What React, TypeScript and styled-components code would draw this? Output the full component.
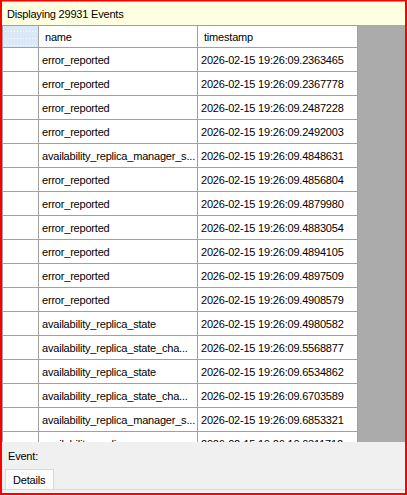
import React from "react";
import styled, { createGlobalStyle } from "styled-components";

const GlobalStyle = createGlobalStyle`
  html, body { margin: 0; padding: 0; background: #ffffff; }
  body { font-family: "Liberation Sans", Arial, sans-serif; }
`;

const Frame = styled.div`
  box-sizing: border-box;
  width: 407px;
  height: 495px;
  border: 2px solid #ff0000;
  border-top-width: 1px;
  background: #f0f0f0;
  display: flex;
  flex-direction: column;
  font-family: "Liberation Sans", Arial, sans-serif;
  font-size: 11px;
  letter-spacing: -0.2px;
  color: #000;
`;

const InfoBar = styled.div`
  box-sizing: border-box;
  height: 24px;
  flex: none;
  border-top: 1px solid #a0a0a0;
  background: #ffffe1;
  display: flex;
  align-items: center;
  padding-left: 5px;
`;

const Viewport = styled.div`
  height: 417px;
  flex: none;
  background: #ababab;
  overflow: hidden;
`;

const Table = styled.div`
  width: 356px;
  box-sizing: border-box;
  border-left: 1px solid #a0a0a0;
  border-top: 1px solid #a0a0a0;
  display: grid;
  grid-template-columns: 36px 159px 160px;
`;

const Cell = styled.div<{ $head?: boolean }>`
  box-sizing: border-box;
  height: ${(p) => (p.$head ? 22 : 24)}px;
  border-right: 1px solid #a0a0a0;
  border-bottom: 1px solid #a0a0a0;
  background: #ffffff;
  display: flex;
  align-items: center;
  padding-left: ${(p) => (p.$head ? 6 : 3)}px;
  white-space: nowrap;
  overflow: hidden;
`;

const Corner = styled.div`
  box-sizing: border-box;
  height: 22px;
  border-right: 1px solid #a0a0a0;
  border-bottom: 1px solid #a0a0a0;
  background-color: #dae8f8;
  background-image: radial-gradient(circle, rgba(255, 255, 255, 0.95) 0.7px, transparent 0.9px);
  background-size: 3px 7px;
  background-position: 1px 2px;
`;

const RowHead = styled.div`
  box-sizing: border-box;
  height: 24px;
  border-right: 1px solid #a0a0a0;
  border-bottom: 1px solid #a0a0a0;
  background: #ffffff;
`;

const BottomPanel = styled.div`
  flex: 1;
  display: flex;
  flex-direction: column;
  background: #f0f0f0;
  padding: 7px 0 3px 0;
`;

const EventLabel = styled.div`
  margin-left: 6px;
  line-height: 14px;
`;

const TabStrip = styled.div`
  margin-top: auto;
  display: flex;
  padding-left: 3px;
  border-bottom: 1px solid #d9d9d9;
`;

const Tab = styled.div`
  box-sizing: border-box;
  width: 49px;
  height: 20px;
  border: 1px solid #d9d9d9;
  border-bottom: none;
  background: #fcfcfc;
  display: flex;
  align-items: center;
  padding-left: 7px;
`;

const rows: [string, string][] = [
  ["error_reported", "2026-02-15 19:26:09.2363465"],
  ["error_reported", "2026-02-15 19:26:09.2367778"],
  ["error_reported", "2026-02-15 19:26:09.2487228"],
  ["error_reported", "2026-02-15 19:26:09.2492003"],
  ["availability_replica_manager_s...", "2026-02-15 19:26:09.4848631"],
  ["error_reported", "2026-02-15 19:26:09.4856804"],
  ["error_reported", "2026-02-15 19:26:09.4879980"],
  ["error_reported", "2026-02-15 19:26:09.4883054"],
  ["error_reported", "2026-02-15 19:26:09.4894105"],
  ["error_reported", "2026-02-15 19:26:09.4897509"],
  ["error_reported", "2026-02-15 19:26:09.4908579"],
  ["availability_replica_state", "2026-02-15 19:26:09.4980582"],
  ["availability_replica_state_cha...", "2026-02-15 19:26:09.5568877"],
  ["availability_replica_state", "2026-02-15 19:26:09.6534862"],
  ["availability_replica_state_cha...", "2026-02-15 19:26:09.6703589"],
  ["availability_replica_manager_s...", "2026-02-15 19:26:09.6853321"],
  ["availability_replica_manager_s...", "2026-02-15 19:26:10.0311712"],
];

export default function App() {
  return (
    <>
      <GlobalStyle />
      <Frame>
        <InfoBar>Displaying 29931 Events</InfoBar>
        <Viewport>
          <Table>
            <Corner />
            <Cell $head>name</Cell>
            <Cell $head>timestamp</Cell>
            {rows.map(([name, ts], i) => (
              <React.Fragment key={i}>
                <RowHead />
                <Cell>{name}</Cell>
                <Cell>{ts}</Cell>
              </React.Fragment>
            ))}
          </Table>
        </Viewport>
        <BottomPanel>
          <EventLabel>Event:</EventLabel>
          <TabStrip>
            <Tab>Details</Tab>
          </TabStrip>
        </BottomPanel>
      </Frame>
    </>
  );
}
